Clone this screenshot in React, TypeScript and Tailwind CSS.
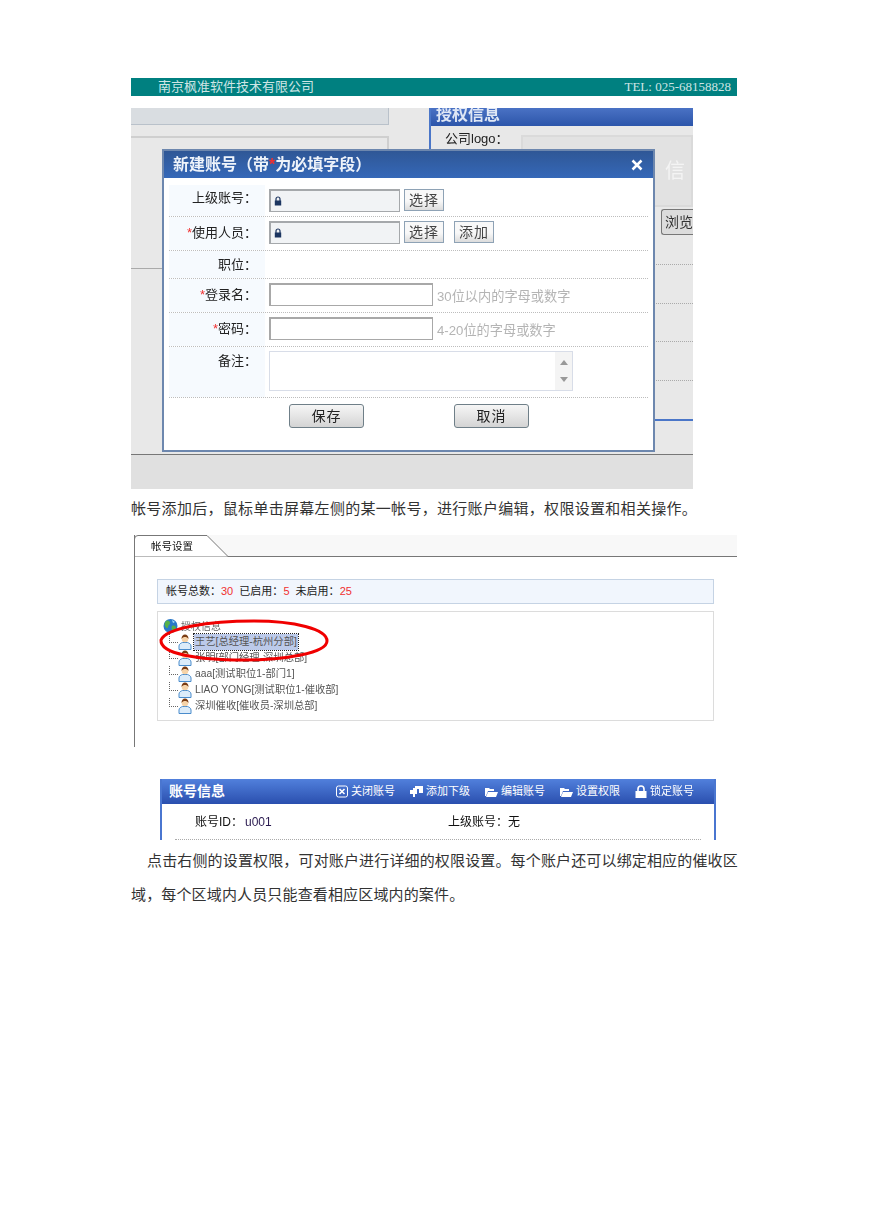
const Star = () => <span className="text-[#f03030]">*</span>

const LockSmall = () => (
  <svg width="8" height="10" viewBox="0 0 8 10" className="ml-[3px]">
    <path d="M2 5V3a2 2 0 0 1 4 0v2" fill="none" stroke="#1c3560" strokeWidth="1.2" />
    <rect x="0.8" y="4.5" width="6.4" height="5" fill="#1c3560" />
  </svg>
)

const SmallBtn = ({ text }: { text: string }) => (
  <div className="w-[40px] h-[22px] flex items-center justify-center border border-[#8ea2b5] bg-[linear-gradient(#f8f8f8_55%,#dcdcdc)] text-[14px] text-[#444] tracking-[1px]">
    {text}
  </div>
)

const BigBtn = ({ text }: { text: string }) => (
  <div className="w-[75px] h-[24px] flex items-center justify-center rounded-[3px] border border-[#6f7f88] bg-[linear-gradient(#f6f6f6,#d4d4d4)] text-[14px] text-[#222] tracking-[1px]">
    {text}
  </div>
)

const FormRow = ({ h, pt, label, star, children }: { h: string; pt: string; label: string; star?: boolean; children?: React.ReactNode }) => (
  <div className={`flex border-b border-dotted border-[#bdbdbd] ${h}`}>
    <div className={`w-[96px] shrink-0 bg-[#f6fafe] text-right pr-[8px] text-[13px] leading-[24px] text-[#222] ${pt}`}>
      {star && <Star />}
      {label}：
    </div>
    <div className="flex items-start gap-[4px] pl-[4px] pt-[4px]">{children}</div>
  </div>
)

const LockedInput = () => (
  <div className="w-[131px] h-[23px] flex items-center border-2 border-[#a5a8ab] border-r border-b bg-[#f1f3f5]">
    <LockSmall />
  </div>
)

const TextInput = () => <div className="w-[164px] h-[23px] border-2 border-[#a8a8a8] border-r border-b bg-white" />

const Hint = ({ text }: { text: string }) => <span className="text-[13.2px] leading-[28px] text-[#b4b4b4]">{text}</span>

const Person = () => (
  <svg width="14" height="16" viewBox="0 0 14 16" className="shrink-0">
    <path d="M1 15.5v-3.5c0-2 2-3 3.5-3.5h5c1.500.5 3.500 1.500 3.500 3.500v3.500z" fill="#dcecfa" stroke="#4a8ccc" />
    <circle cx="7" cy="5" r="3.300" fill="#f6d3a8" />
    <path d="M3.500 5c0-3 1.500-4.500 3.500-4.500s3.500 1.500 3.500 4.500c-1-1.500-2-2-3.500-2s-2.500.5-3.500 2z" fill="#7a3b12" />
  </svg>
)

const Globe = () => (
  <svg width="15" height="16" viewBox="0 0 15 16" className="shrink-0">
    <circle cx="7.500" cy="8" r="7" fill="#2a78c8" />
    <path d="M3 3c2-1 4 0 4 2s-2 2-2 4-2 1-3-1 0-4 1-5zM9 8c2-1 4 0 4 2s-2 3-3 3-2-3-1-5z" fill="#56b04a" />
    <path d="M9 2l3 2-2 1z" fill="#a8e0f8" />
  </svg>
)

const TreeRow = ({ text, selected }: { text: string; selected?: boolean }) => (
  <div className="flex items-center h-[16px]">
    <div className="self-start w-[9px] h-[9px] border-l border-b border-dotted border-[#666]" />
    <Person />
    <span className={`ml-[2px] px-[1px] whitespace-nowrap text-[10.3px] leading-[16px] text-[#555] ${selected ? "bg-[#bccaea] outline-1 outline-dotted outline-[#222]" : ""}`}>
      {text}
    </span>
  </div>
)

const actionIcons = [
  <svg key="a" width="12" height="13" viewBox="0 0 12 13"><rect x="0.500" y="1" width="11" height="11" rx="2" fill="none" stroke="#fff" /><path d="M3.500 4l5 5M8.500 4l-5 5" stroke="#fff" strokeWidth="1.600" /></svg>,
  <svg key="b" width="13" height="11" viewBox="0 0 13 11"><path d="M5 0h8v7H9V3H5zM0 4h3V2h4v6H5v3H3V8H0z" fill="#fff" /></svg>,
  <svg key="c" width="13" height="10" viewBox="0 0 13 10"><path d="M0 1h4l1 1h4v2H3L1 9H0zM3 5h10l-2 5H1z" fill="#fff" /></svg>,
  <svg key="d" width="13" height="10" viewBox="0 0 13 10"><path d="M0 1h4l1 1h4v2H3L1 9H0zM3 5h10l-2 5H1z" fill="#fff" /></svg>,
  <svg key="e" width="12" height="13" viewBox="0 0 12 13"><path d="M3 6V4a3 3 0 0 1 6 0v2" fill="none" stroke="#fff" strokeWidth="1.600" /><rect x="0.500" y="6" width="11" height="7" fill="#fff" /></svg>,
]

const actions = ["关闭账号", "添加下级", "编辑账号", "设置权限", "锁定账号"]

const App = () => {
  return (
    <div className="h-[1228px] bg-white pt-[78px] pl-[131px] overflow-hidden font-['Liberation_Sans','Noto_Sans_CJK_SC',sans-serif]">
      <div className="w-[606px]">
        {/* page header */}
        <div className="h-[18px] bg-[#008080] flex items-center justify-between pl-[27px] pr-[6px] text-[13px] text-[#cfe5e5] font-['Liberation_Serif','Noto_Sans_CJK_SC',serif]">
          <span>南京枫准软件技术有限公司</span>
          <span>TEL: 025-68158828</span>
        </div>

        {/* first screenshot */}
        <div className="relative mt-[12px] w-[562px] h-[381px] blur-[0.3px] overflow-hidden bg-[#e8e8e8] flex flex-col">
          <div className="flex h-[347px] border-b border-[#777]">
            <div className="w-[258px] shrink-0">
              <div className="h-[17px] bg-[#d9dde1] border-b border-r border-[#b9c1ca]" />
              <div className="mt-[11px] h-[133px] border-t-2 border-r-2 border-b border-t-[#cfcfcf] border-r-[#cfcfcf] border-b-[#aaa]" />
            </div>
            <div className="ml-[40px] flex-1 min-w-0 border-l-2 border-[#4a76c8] mb-[34px]">
              <div className="h-[18px] bg-[linear-gradient(#4a72c4,#2c55aa)] pl-[5px] text-[16px] leading-[14px] font-bold text-[#dfe7f5]">授权信息</div>
              <div className="flex pt-[3px]">
                <span className="pl-[14px] w-[90px] text-[13px] leading-[20px] text-[#222]">公司logo：</span>
                <div className="flex-1 h-[72px] mt-[6px] border-2 border-[#dadada] bg-[#e2e2e2] flex justify-end items-center pr-[6px] text-[20px] text-[#f4f4f4]">信</div>
              </div>
              <div className="flex justify-end mt-[2px] h-[26px] overflow-hidden">
                <div className="shrink-0 w-[32px] border border-[#777] rounded-[3px] bg-[#dcdcdc] pl-[3px] text-[14px] leading-[24px] text-[#333] whitespace-nowrap overflow-hidden rounded-r-none border-r-0">浏览</div>
              </div>
              <div className="h-[30px] border-b border-dotted border-[#aaa]" />
              <div className="h-[39px] border-b border-dotted border-[#aaa]" />
              <div className="h-[38px] border-b border-dotted border-[#aaa]" />
              <div className="h-[39px] border-b border-dotted border-[#aaa]" />
              <div className="h-[40px] border-b-2 border-[#4a76c8]" />
            </div>
          </div>
          <div className="flex-1 bg-[#e0e0e0]" />

          {/* dialog over the page */}
          <div className="absolute left-[31px] top-[41px] w-[493px] h-[303px] border-2 border-[#6d87ae] bg-white">
            <div className="h-[27px] bg-[linear-gradient(#2f5796,#3568b8)] flex items-center justify-between pl-[9px] pr-[10px] text-[16px] font-bold text-[#eef3fa]">
              <span>新建账号（带<Star />为必填字段）</span>
              <svg width="12" height="12" viewBox="0 0 12 12"><path d="M1.500 1.500l9 9M10.500 1.500l-9 9" stroke="#fff" strokeWidth="2.500" /></svg>
            </div>
            <div className="pt-[7px] px-[5px]">
              <FormRow h="h-[32px]" pt="pt-[1px]" label="上级账号">
                <LockedInput />
                <SmallBtn text="选择" />
              </FormRow>
              <FormRow h="h-[34px]" pt="pt-[4px]" label="使用人员" star>
                <LockedInput />
                <SmallBtn text="选择" />
                <div className="ml-[6px]"><SmallBtn text="添加" /></div>
              </FormRow>
              <FormRow h="h-[28px]" pt="pt-[2px]" label="职位" />
              <FormRow h="h-[34px]" pt="pt-[4px]" label="登录名" star>
                <TextInput />
                <Hint text="30位以内的字母或数字" />
              </FormRow>
              <FormRow h="h-[34px]" pt="pt-[4px]" label="密码" star>
                <TextInput />
                <Hint text="4-20位的字母或数字" />
              </FormRow>
              <FormRow h="h-[51px]" pt="pt-[2px]" label="备注">
                <div className="w-[304px] h-[40px] border border-[#d8dde8] flex justify-end">
                  <div className="w-[17px] bg-[#f4f4f4] flex flex-col items-center justify-between py-[8px]">
                    <div className="w-0 h-0 border-x-[4px] border-x-transparent border-b-[5px] border-b-[#999]" />
                    <div className="w-0 h-0 border-x-[4px] border-x-transparent border-t-[5px] border-t-[#999]" />
                  </div>
                </div>
              </FormRow>
              <div className="flex gap-[90px] pl-[120px] pt-[6px]">
                <BigBtn text="保存" />
                <BigBtn text="取消" />
              </div>
            </div>
          </div>
        </div>

        <p className="mt-[10px] text-[15px] tracking-[0.3px] leading-[20px] text-[#333] whitespace-nowrap font-['Liberation_Serif','Noto_Sans_CJK_SC',serif]">
          帐号添加后，鼠标单击屏幕左侧的某一帐号，进行账户编辑，权限设置和相关操作。
        </p>

        {/* second screenshot */}
        <div className="relative mt-[16px] ml-[3px] w-[603px] h-[212px] blur-[0.25px] border-l border-[#777] overflow-hidden">
          <div className="relative h-[22px] bg-[#f8f8f8] border-b border-[#777]">
            <svg width="96" height="22" viewBox="0 0 96 22" className="absolute left-[-1px] top-0">
              <path d="M0.500 22V4q0-3.500 3.500-3.500h69L94 21.500V22z" fill="#fff" stroke="#777" />
            </svg>
            <span className="absolute left-[16px] top-[3px] text-[10.5px] leading-[16px] text-[#111]">帐号设置</span>
          </div>
          <div className="ml-[22px] mt-[22px] w-[557px] h-[25px] bg-[#f1f6fd] border border-[#c5d3e4] pl-[8px] text-[11px] leading-[23px] text-[#222] whitespace-nowrap">
            帐号总数：<span className="text-[#f03030]">30</span>&nbsp;&nbsp;已启用：<span className="text-[#f03030]">5</span>&nbsp;&nbsp;未启用：<span className="text-[#f03030]">25</span>
          </div>
          <div className="ml-[22px] mt-[7px] w-[557px] h-[110px] border border-[#dcdcdc] pl-[5px] pt-[6px]">
            <div className="flex items-center h-[16px]">
              <Globe />
              <span className="ml-[3px] text-[10px] text-[#666]">授权信息</span>
            </div>
            <div className="ml-[6px]">
              <TreeRow text="王艺[总经理-杭州分部]" selected />
              <TreeRow text="张明[部门经理-深圳总部]" />
              <TreeRow text="aaa[测试职位1-部门1]" />
              <TreeRow text="LIAO YONG[测试职位1-催收部]" />
              <TreeRow text="深圳催收[催收员-深圳总部]" />
            </div>
          </div>
          {/* red hand drawn circle */}
          <svg width="174" height="44" viewBox="0 0 174 44" className="absolute left-[23px] top-[83px]">
            <path d="M3 22C8 10 50 3 96 3c40 0 73 8 73 20 0 12-42 19-84 19C40 42 2 36 3 22z" fill="none" stroke="#f00000" strokeWidth="3" />
          </svg>
        </div>

        {/* third screenshot */}
        <div className="mt-[32px] ml-[29px] w-[556px] h-[61px] blur-[0.2px] border-x-2 border-[#4a76d0] overflow-hidden">
          <div className="h-[25px] -mx-[2px] bg-[linear-gradient(#5180dc,#2a4fae)] flex items-center justify-between pl-[9px] pr-[22px] text-white">
            <span className="text-[14px] font-bold">账号信息</span>
            <div className="flex gap-[15px] text-[11px]">
              {actions.map((a, i) => (
                <div key={a} className="flex items-center gap-[3px]">
                  {actionIcons[i]}
                  <span className="whitespace-nowrap">{a}</span>
                </div>
              ))}
            </div>
          </div>
          <div className="flex pl-[33px] pt-[10px] text-[12px] leading-[17px] text-[#111]">
            <span className="w-[253px]">账号ID：<span className="text-[#2a1a50] ml-[2px]">u001</span></span>
            <span>上级账号：无</span>
          </div>
          <div className="mx-[13px] mt-[8px] border-b border-dotted border-[#aaa]" />
        </div>

        <p className="mt-[4px] text-[15px] tracking-[0.15px] leading-[34px] text-[#333] indent-[16px] w-[620px] font-['Liberation_Serif','Noto_Sans_CJK_SC',serif]">
          点击右侧的设置权限，可对账户进行详细的权限设置。每个账户还可以绑定相应的催收区域，每个区域内人员只能查看相应区域内的案件。
        </p>
      </div>
    </div>
  )
}

export default App
